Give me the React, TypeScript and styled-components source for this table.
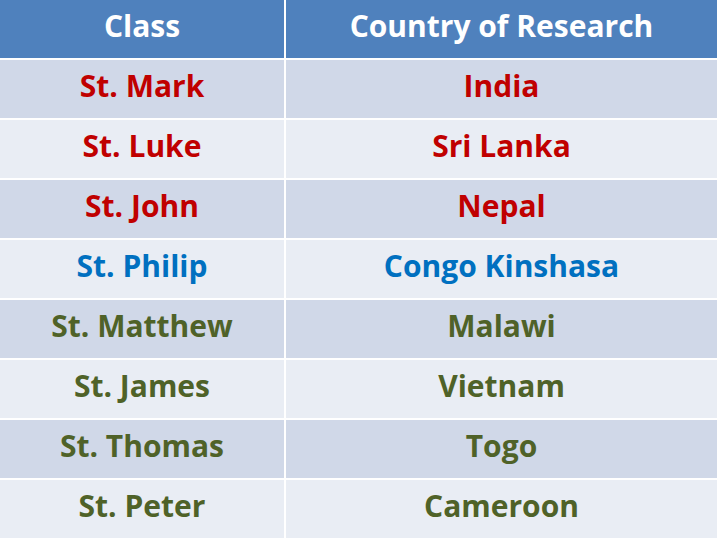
import React from "react";
import styled, { createGlobalStyle } from "styled-components";

const Global = createGlobalStyle`
  html, body { margin: 0; padding: 0; background: #ffffff; }
  body { font-family: "Open Sans", Lato, sans-serif; }
`;

type Tone = "red" | "blue" | "green";

const toneColor: Record<Tone, string> = {
  red: "#c00000",
  blue: "#0070c0",
  green: "#4f6228",
};

const rows: { cls: string; country: string; tone: Tone }[] = [
  { cls: "St. Mark", country: "India", tone: "red" },
  { cls: "St. Luke", country: "Sri Lanka", tone: "red" },
  { cls: "St. John", country: "Nepal", tone: "red" },
  { cls: "St. Philip", country: "Congo Kinshasa", tone: "blue" },
  { cls: "St. Matthew", country: "Malawi", tone: "green" },
  { cls: "St. James", country: "Vietnam", tone: "green" },
  { cls: "St. Thomas", country: "Togo", tone: "green" },
  { cls: "St. Peter", country: "Cameroon", tone: "green" },
];

const Table = styled.div`
  display: grid;
  grid-template-columns: 284px 431px;
  grid-auto-rows: 58px;
  gap: 2px;
  width: 717px;
  background: #ffffff;
`;

const HeadCell = styled.div`
  display: flex;
  align-items: center;
  justify-content: center;
  background: #4f81bd;
  color: #ffffff;
  font-family: "Open Sans", sans-serif;
  font-weight: 700;
  font-size: 30px;
  padding-bottom: 8px;
  box-sizing: border-box;
`;

const Cell = styled.div<{ $tone: Tone; $alt: boolean }>`
  display: flex;
  align-items: center;
  justify-content: center;
  background: ${(p) => (p.$alt ? "#e9edf4" : "#d0d8e8")};
  color: ${(p) => toneColor[p.$tone]};
  font-family: "Open Sans", sans-serif;
  font-weight: 700;
  font-size: 30px;
  padding-bottom: 7px;
  box-sizing: border-box;
`;

export default function App() {
  return (
    <>
      <Global />
      <Table>
        <HeadCell>Class</HeadCell>
        <HeadCell>Country of Research</HeadCell>
        {rows.map((r, i) => (
          <React.Fragment key={r.cls}>
            <Cell $tone={r.tone} $alt={i % 2 === 1}>{r.cls}</Cell>
            <Cell $tone={r.tone} $alt={i % 2 === 1}>{r.country}</Cell>
          </React.Fragment>
        ))}
      </Table>
    </>
  );
}
